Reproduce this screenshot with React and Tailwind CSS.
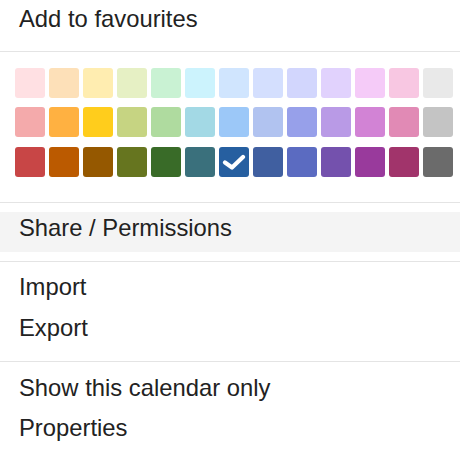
import React from 'react';

const colors = [
  ['#ffe0e3', '#fde0b8', '#ffedb0', '#e6f0c4', '#c9f2d3', '#ccf3fd', '#d0e5fe', '#d4dffe', '#d2d6fd', '#e1d2fd', '#f5cbf8', '#f8c7e2', '#e9e9e9'],
  ['#f4aaab', '#ffb141', '#ffcd1c', '#c6d482', '#afdb9f', '#a3d9e5', '#9cc8f8', '#b1c3f0', '#97a0ea', '#b99ae6', '#d283d5', '#e18ab5', '#c4c4c4'],
  ['#c84646', '#bb5a00', '#955800', '#66751f', '#396b28', '#3a707c', '#265fa0', '#405fa0', '#5b6bc1', '#7451ad', '#993a9c', '#a1346b', '#6b6b6b'],
];

const Item = ({ children, active, tall }) => (
  <div className={`${tall ? 'h-[41px]' : 'h-[40px]'} pl-[19px] text-[23.8px] leading-[32px] text-[#222] ${active ? 'bg-[#f4f4f4]' : ''}`}>
    {children}
  </div>
);

const Sep = ({ className }) => <div className={`h-px bg-[#e4e4e4] ${className}`} />;

export default function App() {
  return (
    <div className="w-[460px] h-[452px] bg-white overflow-hidden pt-[3px]" style={{ fontFamily: '"Liberation Sans", Arial, sans-serif' }}>
      <Item>Add to favourites</Item>
      <Sep className="mt-[8px]" />
      <div className="pt-[16px] pl-[15px] flex flex-col gap-y-[9.3px]">
        {colors.map((row, r) => (
          <div key={r} className="flex gap-x-[4px]">
            {row.map((c, i) => (
              <div key={i} className="w-[30px] h-[30px] rounded-[3px] flex items-center justify-center" style={{ backgroundColor: c }}>
                {r === 2 && i === 6 && (
                  <svg width="24" height="16" viewBox="0 0 24 16">
                    <polyline points="3,8.5 10,13.5 21,3" fill="none" stroke="#fff" strokeWidth="4.2" strokeLinecap="round" strokeLinejoin="round" />
                  </svg>
                )}
              </div>
            ))}
          </div>
        ))}
      </div>
      <Sep className="mt-[25px]" />
      <div className="mt-[9px]">
        <Item active>Share / Permissions</Item>
      </div>
      <Sep className="mt-[9px]" />
      <div className="mt-[9px]">
        <Item tall>Import</Item>
        <Item>Export</Item>
      </div>
      <Sep className="mt-[9px]" />
      <div className="mt-[10px]">
        <Item>Show this calendar only</Item>
        <Item>Properties</Item>
      </div>
    </div>
  );
}
